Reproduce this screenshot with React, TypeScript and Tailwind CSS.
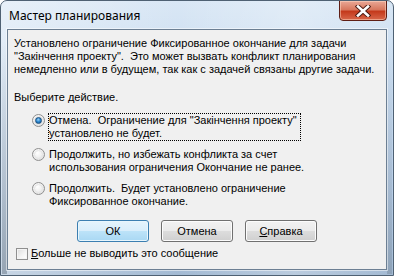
import React from "react";

const font = { fontFamily: '"Liberation Sans", Arial, sans-serif' };

function Radio({ checked }: { checked?: boolean }) {
  return (
    <div className="relative w-[13px] h-[13px] shrink-0 rounded-full border border-[#8f8f8f] bg-[radial-gradient(circle_at_40%_35%,#ffffff_0%,#f0f0f0_45%,#d6d6d6_100%)]">
      <div className="absolute inset-[1px] rounded-full border border-[#e6e6e6]" />
      {checked && (
        <div className="absolute left-[2px] top-[2px] w-[7px] h-[7px] rounded-full border border-[#1b4f7e] bg-[radial-gradient(circle_at_45%_35%,#9fd3f7_0%,#2f8ad1_45%,#0e4f8f_100%)]" />
      )}
    </div>
  );
}

function Button({ children, primary }: { children: React.ReactNode; primary?: boolean }) {
  return (
    <div
      className={
        "w-[72px] h-[22px] rounded-[3px] border flex items-center justify-center text-[11px] text-black " +
        (primary
          ? "border-[#3c7fb1] bg-[linear-gradient(to_bottom,#e5f4fc_0%,#d9eefb_48%,#bde3f8_50%,#a9d8f3_100%)] shadow-[inset_0_0_0_1px_#e8f6fd]"
          : "border-[#707070] bg-[linear-gradient(to_bottom,#f2f2f2_0%,#ebebeb_48%,#dddddd_50%,#cfcfcf_100%)] shadow-[inset_0_0_0_1px_#fcfcfc]")
      }
    >
      {children}
    </div>
  );
}

export default function App() {
  return (
    <div
      className="relative w-[394px] h-[276px] overflow-hidden rounded-t-[7px] border border-[#4f6173] bg-[linear-gradient(to_bottom,#d9e7f5_0%,#c8dbef_30%,#b7cde6_70%,#a3bad3_100%)]"
      style={font}
    >
      <div className="absolute inset-0 bg-[linear-gradient(to_right,rgba(255,255,255,0.4)_0%,rgba(255,255,255,0)_45%,rgba(255,255,255,0.25)_75%,rgba(255,255,255,0)_100%)]" />
      <div className="absolute left-[1px] top-[40px] bottom-[1px] w-[5px] bg-[linear-gradient(to_bottom,rgba(120,140,160,0)_0%,rgba(90,105,120,0.45)_100%)]" />
      <div className="absolute right-[1px] top-[40px] bottom-[1px] w-[5px] bg-[linear-gradient(to_bottom,rgba(120,140,160,0)_0%,rgba(90,105,120,0.3)_100%)]" />
      {/* close button */}
      <div className="absolute right-[6px] top-[-1px] w-[48px] h-[21px] rounded-b-[4px] border border-[#5e1e15] bg-[linear-gradient(to_bottom,#eaa896_0%,#d8785f_45%,#c43a1c_55%,#d8674a_100%)] shadow-[inset_0_0_0_1px_rgba(255,220,200,0.5)] flex items-center justify-center">
        <svg width="16" height="12" viewBox="0 0 16 12">
          <path d="M3 1.5 L13 10.5 M13 1.5 L3 10.5" stroke="#4a1a12" strokeWidth="4.5" strokeLinecap="square" />
          <path d="M3 1.5 L13 10.5 M13 1.5 L3 10.5" stroke="#ffffff" strokeWidth="2.6" strokeLinecap="square" />
        </svg>
      </div>
      <div className="relative flex flex-col h-full">
        <div className="h-[28px] flex items-center pl-[8px] text-[12px] text-black pt-[2px]" style={{ fontFamily: '"Noto Sans", "Liberation Sans", sans-serif' }}>
          Мастер планирования
        </div>
        <div className="mx-[6px] mb-[5px] flex-1 border border-[#6c7f93] shadow-[0_0_0_1px_rgba(255,255,255,0.5)] bg-[#f0f0f0] px-[6px] pt-[7px] text-[11px] leading-[13px] text-black">
          <div>
            Установлено ограничение Фиксированное окончание для задачи
            <br />
            "Закінчення проекту".&nbsp; Это может вызвать конфликт планирования
            <br />
            немедленно или в будущем, так как с задачей связаны другие задачи.
          </div>
          <div className="mt-[15px]">Выберите действие.</div>
          <div className="mt-[9px] ml-[18px] flex flex-col gap-[6px]">
            <div className="flex items-start gap-[3px]">
              <div className="mt-[1px]"><Radio checked /></div>
              <div className="border border-dotted border-black pr-[3px]">
                Отмена.&nbsp; Ограничение для "Закінчення проекту"
                <br />
                установлено не будет.
              </div>
            </div>
            <div className="flex items-start gap-[3px]">
              <div className="mt-[1px]"><Radio /></div>
              <div className="border border-transparent">
                Продолжить, но избежать конфликта за счет
                <br />
                использования ограничения Окончание не ранее.
              </div>
            </div>
            <div className="flex items-start gap-[3px]">
              <div className="mt-[1px]"><Radio /></div>
              <div className="border border-transparent">
                Продолжить.&nbsp; Будет установлено ограничение
                <br />
                Фиксированное окончание.
              </div>
            </div>
          </div>
          <div className="mt-[11px] flex justify-center gap-[12px]">
            <Button primary>ОК</Button>
            <Button>Отмена</Button>
            <Button>
              <span><span className="underline">С</span>правка</span>
            </Button>
          </div>
          <div className="mt-[5px] flex items-center gap-[3px] pl-[2px]">
            <div className="w-[12px] h-[12px] border border-[#8f8f8f] bg-[linear-gradient(135deg,#dcdcdc_0%,#f4f4f4_60%,#ffffff_100%)] shadow-[inset_0_0_0_1px_#f4f4f4]" />
            <span><span className="underline">Б</span>ольше не выводить это сообщение</span>
          </div>
        </div>
      </div>
    </div>
  );
}
